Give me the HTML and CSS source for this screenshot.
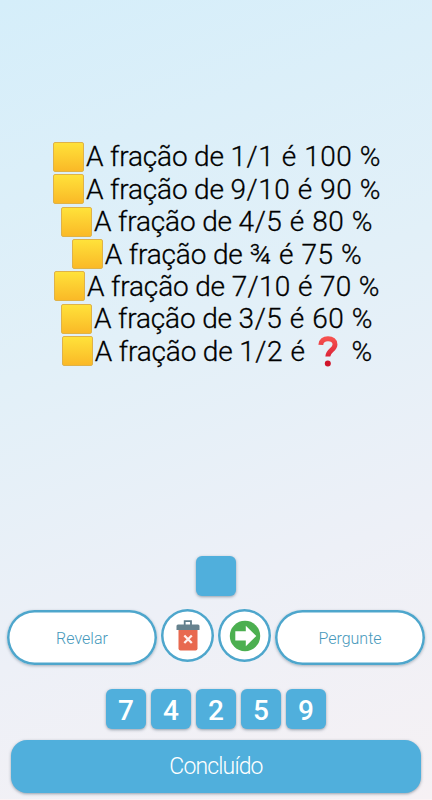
FILE: index.html
```html
<!DOCTYPE html>
<html lang="pt">
<head>
<meta charset="utf-8">
<title>Quiz</title>
<link rel="stylesheet" href="styles.css">
</head>
<body>
<main class="screen">
  <section class="puzzle">
    <div class="line"><i class="square"></i><span class="lead">A fração de </span><span class="value">1/1 é 100 %</span></div>
    <div class="line"><i class="square"></i><span class="lead">A fração de </span><span class="value">9/10 é 90 %</span></div>
    <div class="line"><i class="square"></i><span class="lead">A fração de </span><span class="value">4/5 é 80 %</span></div>
    <div class="line"><i class="square"></i><span class="lead">A fração de </span><span class="value">¾ é 75 %</span></div>
    <div class="line"><i class="square"></i><span class="lead">A fração de </span><span class="value tight">7/10 é 70 %</span></div>
    <div class="line"><i class="square"></i><span class="lead">A fração de </span><span class="value">3/5 é 60 %</span></div>
    <div class="line"><i class="square"></i><span class="lead">A fração de </span><span class="value">1/2 é</span><svg class="question" viewBox="0 0 20 31"><defs><linearGradient id="red" x1="0" y1="0" x2="0" y2="1"><stop offset="0" stop-color="#f5504e"/><stop offset="1" stop-color="#dc2438"/></linearGradient></defs><path d="M2.800 8.800C3 4.800 6 2.800 10 2.800c4.300 0 7 2.100 7 5.600 0 5.600-7.200 6-7.200 12.200" fill="none" stroke="url(#red)" stroke-width="4.900"/><circle cx="9.800" cy="27.400" r="3" fill="#d0142a"/></svg><span>%</span></div>
  </section>
  <div class="answer"><span class="tile"></span></div>
  <div class="actions">
    <button class="pill">Revelar</button>
    <button class="round" aria-label="Apagar"><svg width="24" height="32" viewBox="0 0 24 32"><path d="M8.700 5V1.200h6.300V5" fill="none" stroke="#5f7d8b" stroke-width="1.800"/><path d="M2.500 7h19v21.500a2 2 0 0 1-2 2h-15a2 2 0 0 1-2-2z" fill="#e8694f"/><path d="M2 4.500h20a1.500 1.500 0 0 1 1.500 1.500v4H.5V6A1.500 1.500 0 0 1 2 4.500z" fill="#66828e"/><path d="M8.300 15.500l7.500 7.500M15.800 15.500L8.300 23" stroke="#fff0ed" stroke-width="2.300"/></svg></button>
    <button class="round" aria-label="Avançar"><svg width="32" height="32" viewBox="0 0 32 32"><circle cx="16" cy="16" r="15.200" fill="#4caf50"/><path d="M6.300 11.300h10.500V5.800L27.300 16 16.800 26.300v-5.700H6.300z" fill="#fff"/></svg></button>
    <button class="pill">Pergunte</button>
  </div>
  <div class="digits"><span class="tile">7</span><span class="tile">4</span><span class="tile">2</span><span class="tile">5</span><span class="tile">9</span></div>
  <button class="done">Concluído</button>
</main>
</body>
</html>
```
FILE: styles.css
```css
* { box-sizing: border-box; }
body { margin: 0; font-family: Roboto, sans-serif; }
button { font-family: inherit; padding: 0; }
.screen {
  height: 800px;
  overflow: hidden;
  background: linear-gradient(160deg, #d5eefa 0%, #e2f0f8 40%, #edf0f7 70%, #f6f1f4 100%);
  border-bottom: 1px solid #fbf3f5;
}
.puzzle { padding: 140.500px 0 0 2px; height: 556px; }
.line {
  display: flex;
  justify-content: center;
  align-items: center;
  height: 32.450px;
  font-size: 28px;
  font-weight: 300;
  color: #000;
  white-space: nowrap;
  -webkit-text-stroke: 0.300px #000;
}
.lead { white-space: pre; letter-spacing: -0.150px; }
.value { letter-spacing: 0.550px; }
.tight { letter-spacing: 0.350px; }
.square {
  width: 31px;
  height: 30px;
  margin-right: 2px;
  border: 1px solid #dfb248;
  border-radius: 2px;
  background: linear-gradient(#ffe23a, #fab927);
}
.question { width: 20px; height: 31px; margin: 0 14px 0 12px; }
.answer { display: flex; justify-content: center; height: 53px; }
.tile {
  width: 40px;
  height: 40px;
  border-radius: 6px;
  background: #50afdc;
  box-shadow: 0 1px 3px rgba(60, 80, 100, 0.5);
  color: #fff;
  font-size: 28px;
  font-weight: 500;
  line-height: 43px;
  text-align: center;
}
.actions { display: flex; justify-content: center; gap: 4px; height: 80px; }
.pill {
  width: 150px;
  height: 55px;
  margin-top: 1px;
  padding-top: 1px;
  border: 0;
  border-radius: 28px;
  background: #fff;
  box-shadow: inset 0 0 0 2.500px #4ea6cc, 0 1px 3px rgba(60, 80, 100, 0.4);
  color: #4698bb;
  font-size: 16px;
  font-weight: 300;
}
.round {
  display: flex;
  align-items: center;
  justify-content: center;
  width: 53px;
  height: 53px;
  border: 0;
  box-shadow: inset 0 0 0 2.500px #4ea6cc;
  border-radius: 50%;
  background: #fff;
}
.digits { display: flex; justify-content: center; gap: 5px; height: 51px; }
.done {
  display: block;
  width: 410px;
  height: 53px;
  margin: 0 auto;
  border: 0;
  border-radius: 16px;
  background: #50afdc;
  box-shadow: 0 1px 3px rgba(60, 80, 100, 0.5);
  color: #fff;
  font-size: 23px;
  font-weight: 300;
  letter-spacing: -0.850px;
}
```
